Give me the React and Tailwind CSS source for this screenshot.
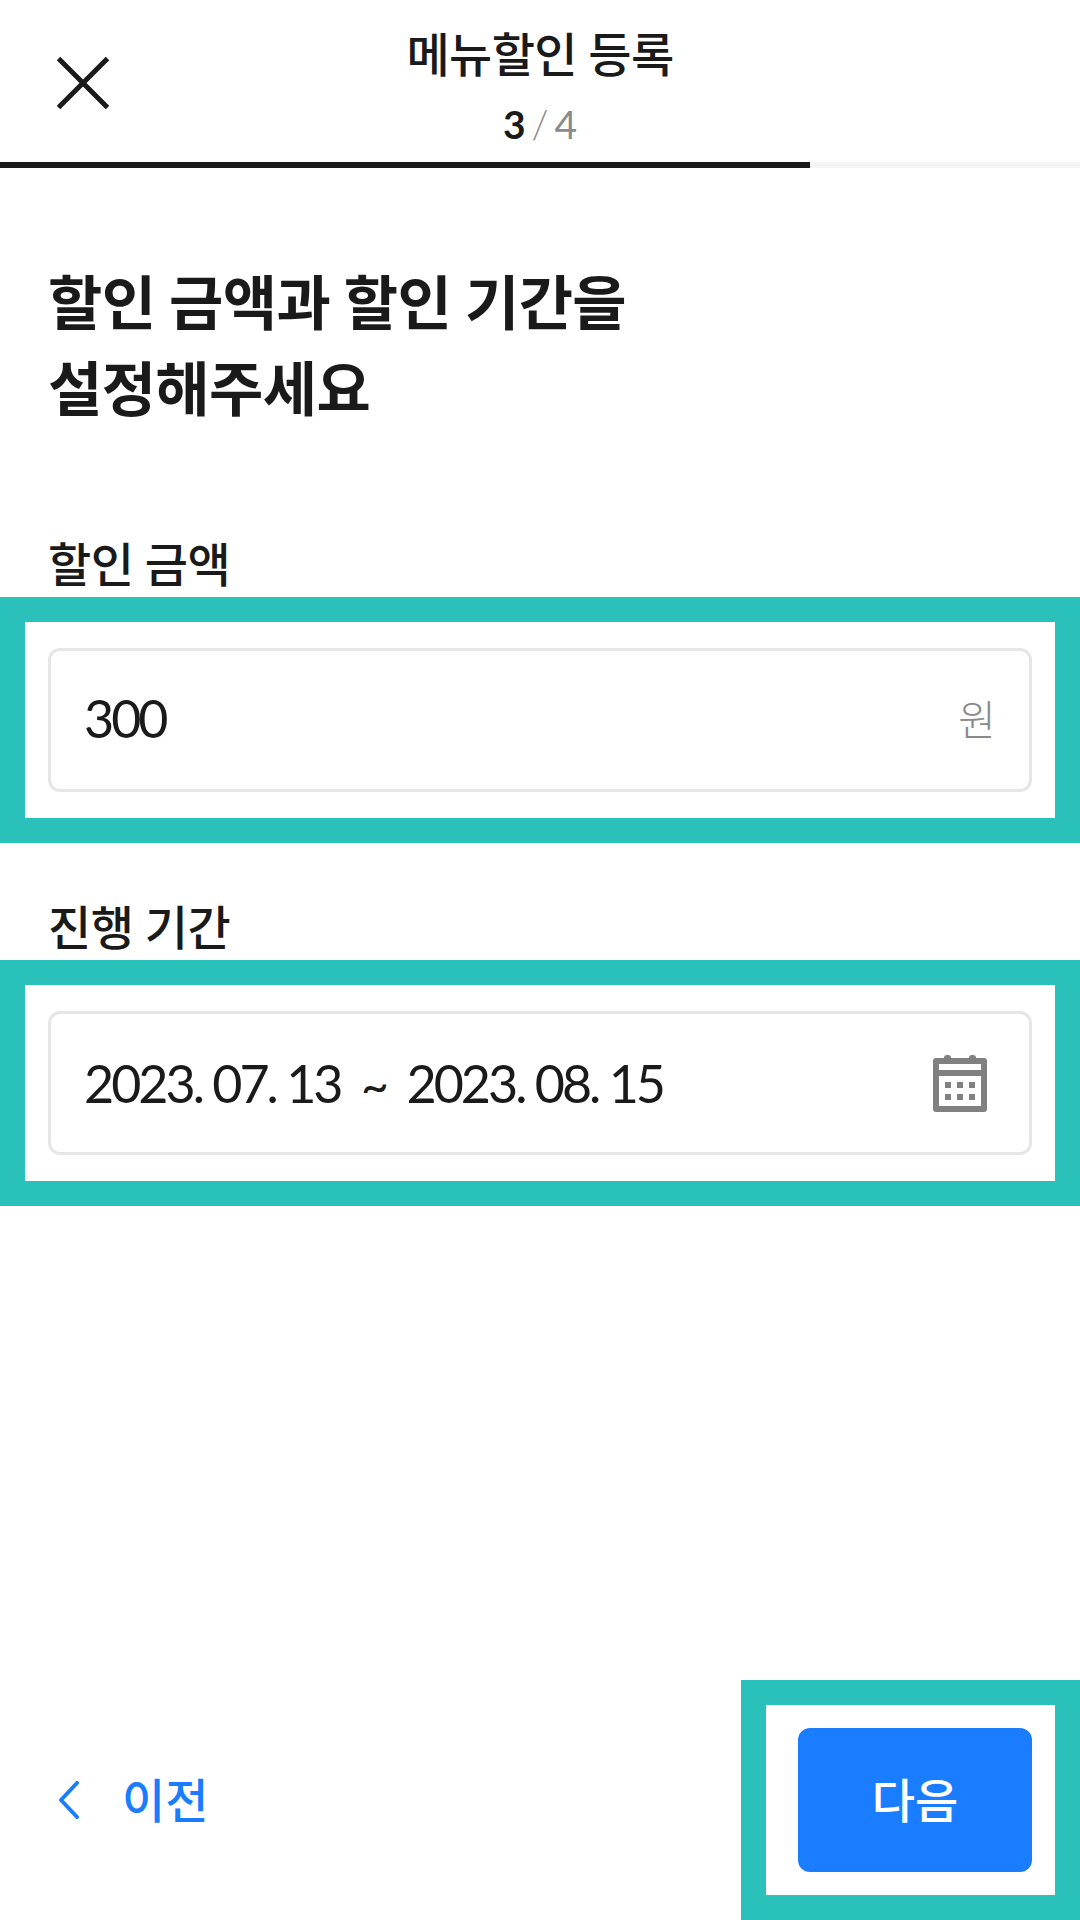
import React from 'react';

const FONT = "font-['Lato','Noto_Sans_CJK_KR',sans-serif]";

const CalendarIcon = () => (
  <svg width="54" height="57" viewBox="0 0 54 57" className="mr-[9px] shrink-0">
    <rect x="0" y="3" width="54" height="54" rx="3" fill="#808080" />
    <rect x="11" y="0" width="7" height="8" rx="3" fill="#808080" />
    <rect x="36" y="0" width="7" height="8" rx="3" fill="#808080" />
    <rect x="6" y="9" width="42" height="6" fill="#fff" />
    <rect x="6" y="21" width="42" height="30" fill="#fff" />
    {[12, 24, 36].map((x) =>
      [27, 39].map((y) => <rect key={`${x}-${y}`} x={x} y={y} width="6" height="6" fill="#808080" />)
    )}
  </svg>
);

const Field = ({ children }) => (
  <div className="border-[25px] border-[#2bc1bb] bg-white px-[23px] py-[26px]">
    <div className="flex h-[144px] items-center justify-between rounded-[12px] border-[3px] border-[#e6e6e6] pl-[33px] pr-[33px]">
      {children}
    </div>
  </div>
);

export default function App() {
  return (
    <div className={`flex h-[1920px] w-[1080px] flex-col bg-white text-[#1a1a1a] ${FONT}`}>
      {/* Top bar */}
      <div className="grid h-[162px] grid-cols-[1fr_auto_1fr]">
        <button className="self-start pl-[57px] pt-[57px]">
          <svg width="52" height="52" viewBox="0 0 52 52" fill="none" stroke="#1a1a1a" strokeWidth="5">
            <path d="M1.5 1.5 50.5 50.5M50.5 1.5 1.5 50.5" />
          </svg>
        </button>
        <div className="flex flex-col items-center pt-[24px]">
          <h1 className="text-[47px] font-medium leading-[60px] tracking-[-0.6px]">메뉴할인 등록</h1>
          <div className="mt-[18px] flex items-center text-[39px] leading-[44px]">
            <span className="font-bold">3</span>
            <span className="mx-[6px] font-light text-[#8a8a8a]">/</span>
            <span className="font-normal text-[#8a8a8a]">4</span>
          </div>
        </div>
      </div>

      {/* Progress */}
      <div className="h-[6px] bg-[#f4f4f5]">
        <div className="h-full w-[810px] bg-[#1a1a1a]" />
      </div>

      {/* Title */}
      <h2 className="mt-[92px] pl-[48px] text-[59px] font-bold leading-[86px] tracking-[-0.6px]">
        할인 금액과 할인 기간을
        <br />
        설정해주세요
      </h2>

      <label className="mb-[3px] mt-[102px] block pl-[48px] text-[47px] font-medium leading-[60px] tracking-[-0.5px]">할인 금액</label>
      <Field>
        <span className="pb-[5px] text-[52px] tracking-[-3px]">300</span>
        <span className="text-[41px] font-light text-[#8a8a8a]">원</span>
      </Field>

      <label className="mb-[3px] mt-[54px] block pl-[48px] text-[47px] font-medium leading-[60px] tracking-[-0.5px]">진행 기간</label>
      <Field>
        <span className="whitespace-pre text-[52px] tracking-[-3px]">
          2023. 07. 13  <span className="text-[48px]">~</span>  2023. 08. 15
        </span>
        <CalendarIcon />
      </Field>

      {/* Footer */}
      <div className="mt-auto flex items-center justify-between">
        <button className="flex items-center pl-[59px] text-[#1a7dff]">
          <svg width="20" height="38" viewBox="0 0 20 38" fill="none" stroke="#1a7dff" strokeWidth="4" strokeLinecap="round" strokeLinejoin="round">
            <path d="M18 2 2 19l16 17" />
          </svg>
          <span className="ml-[43px] text-[47px] font-medium leading-[60px]">이전</span>
        </button>
        <div className="h-[240px] w-[339px] border-[25px] border-[#2bc1bb] bg-white pb-[23px] pl-[32px] pr-[23px] pt-[23px]">
          <button className="flex h-full w-full items-center justify-center rounded-[12px] bg-[#1a7dff] text-[47px] font-medium text-white">
            다음
          </button>
        </div>
      </div>
    </div>
  );
}
